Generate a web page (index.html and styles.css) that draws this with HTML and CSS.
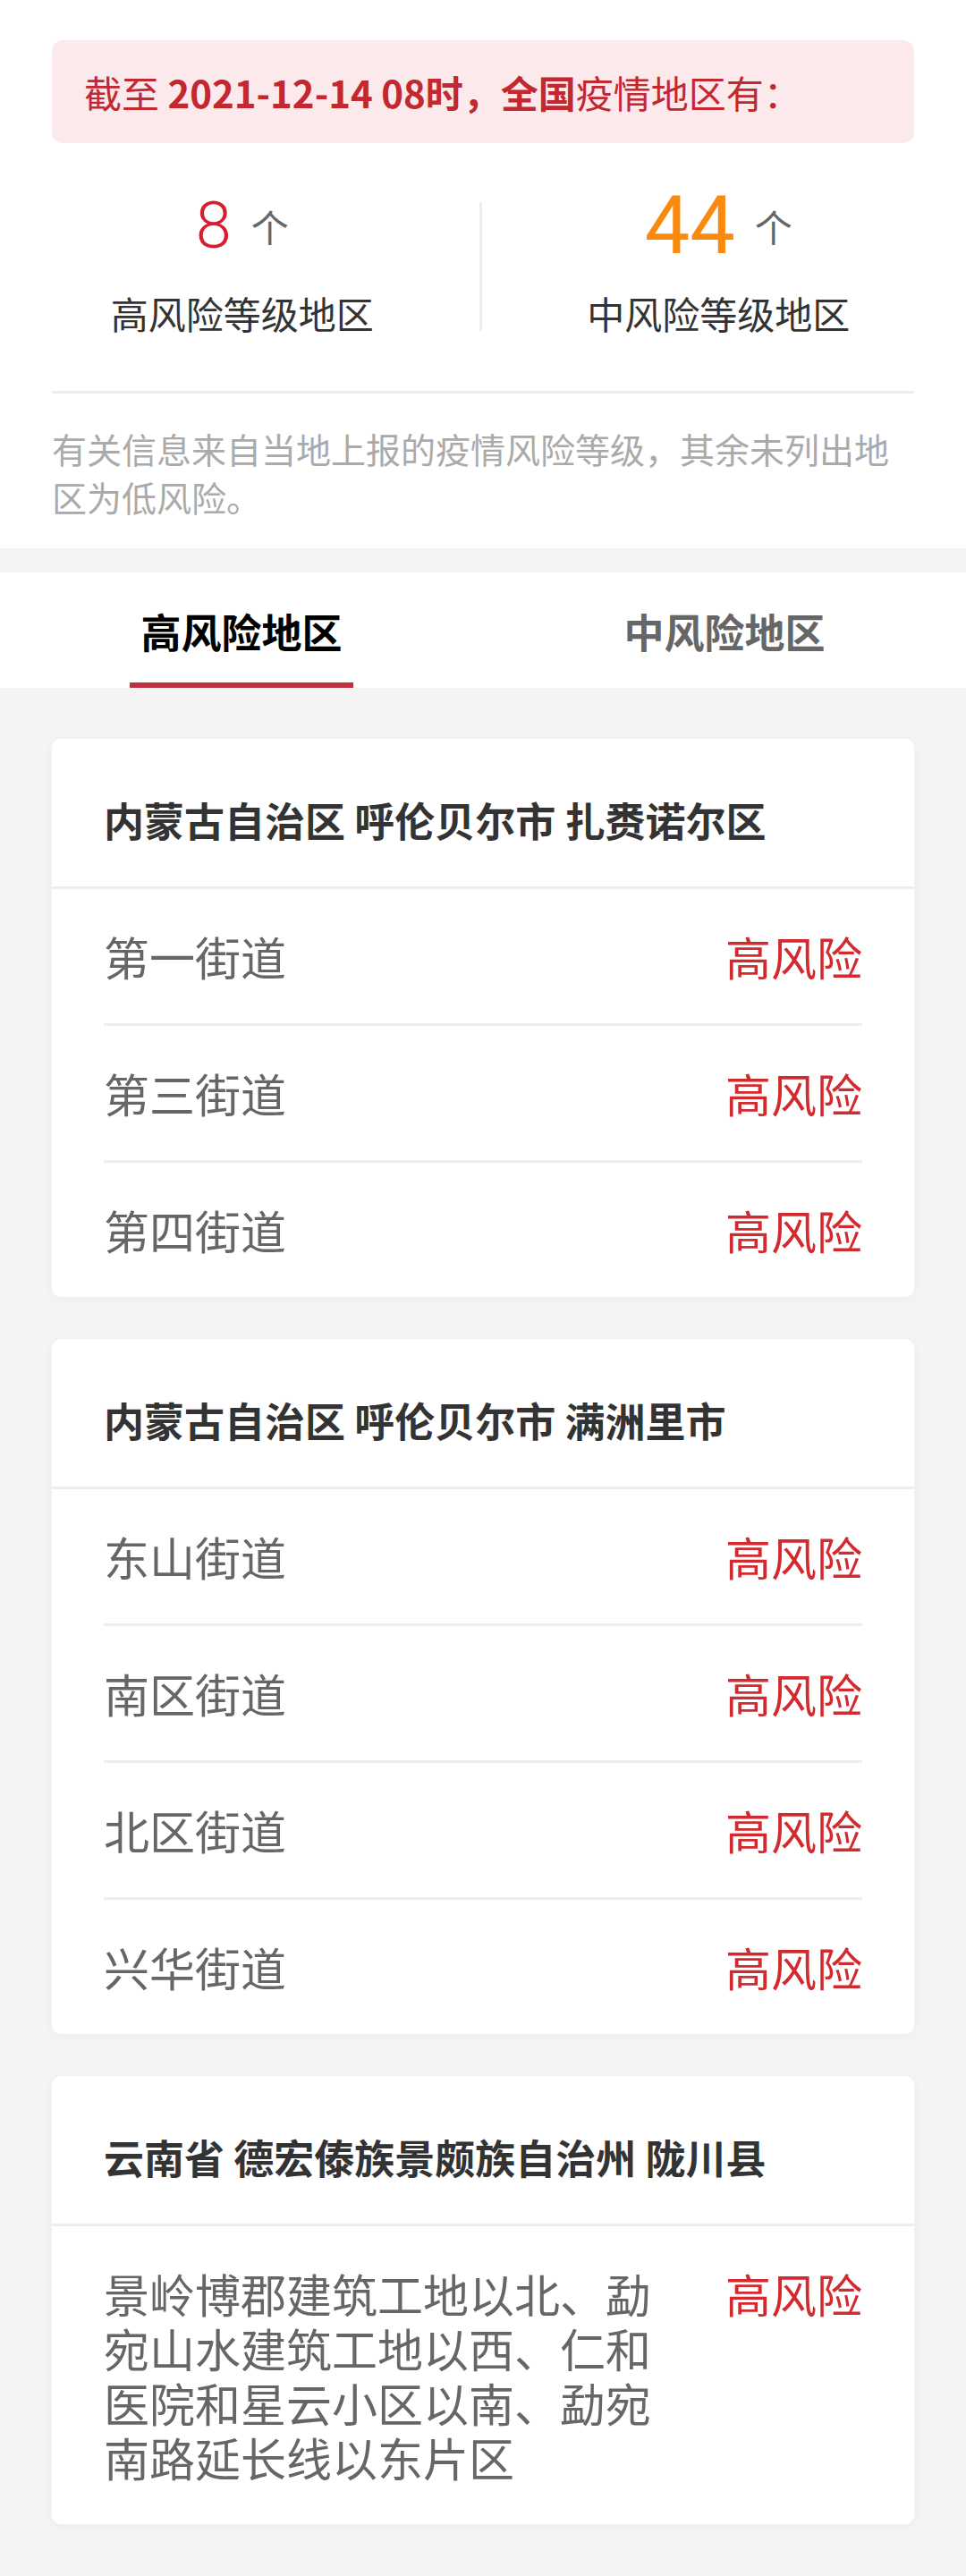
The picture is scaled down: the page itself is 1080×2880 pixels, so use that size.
FILE: index.html
```html
<!DOCTYPE html>
<html lang="zh-CN">
<head>
<meta charset="utf-8">
<title>疫情风险等级地区</title>
<link rel="stylesheet" href="styles.css">
</head>
<body>
<div class="page">
  <section class="summary">
    <div class="alert">截至&nbsp;<b>2021-12-14 08时，全国</b>疫情地区有：</div>
    <div class="stats">
      <div class="stat">
        <div class="stat-num"><span class="num num-high">8</span><span class="unit">个</span></div>
        <div class="stat-label">高风险等级地区</div>
      </div>
      <div class="stat-divider"></div>
      <div class="stat">
        <div class="stat-num"><span class="num num-mid">44</span><span class="unit">个</span></div>
        <div class="stat-label">中风险等级地区</div>
      </div>
    </div>
    <div class="rule"></div>
    <p class="note">有关信息来自当地上报的疫情风险等级，其余未列出地区为低风险。</p>
  </section>

  <nav class="tabs">
    <div class="tab tab-active"><span class="tab-text">高风险地区</span><span class="tab-bar"></span></div>
    <div class="tab"><span class="tab-text">中风险地区</span><span class="tab-bar"></span></div>
  </nav>

  <main class="list">
    <div class="card">
      <div class="card-head">内蒙古自治区 呼伦贝尔市 扎赉诺尔区</div>
      <div class="rows">
        <div class="row"><span class="place">第一街道</span><span class="risk">高风险</span></div>
        <div class="row"><span class="place">第三街道</span><span class="risk">高风险</span></div>
        <div class="row"><span class="place">第四街道</span><span class="risk">高风险</span></div>
      </div>
    </div>

    <div class="card">
      <div class="card-head">内蒙古自治区 呼伦贝尔市 满洲里市</div>
      <div class="rows">
        <div class="row"><span class="place">东山街道</span><span class="risk">高风险</span></div>
        <div class="row"><span class="place">南区街道</span><span class="risk">高风险</span></div>
        <div class="row"><span class="place">北区街道</span><span class="risk">高风险</span></div>
        <div class="row"><span class="place">兴华街道</span><span class="risk">高风险</span></div>
      </div>
    </div>

    <div class="card">
      <div class="card-head">云南省 德宏傣族景颇族自治州 陇川县</div>
      <div class="rows">
        <div class="row"><span class="place">景岭博郡建筑工地以北、勐宛山水建筑工地以西、仁和医院和星云小区以南、勐宛南路延长线以东片区</span><span class="risk">高风险</span></div>
      </div>
    </div>
  </main>
</div>
</body>
</html>
```

FILE: styles.css
```css
html, body {
  margin: 0;
  padding: 0;
}

body {
  background: #f4f4f4;
  font-family: "Noto Sans CJK SC", "Noto Sans", sans-serif;
  color: #333;
}

.page {
  width: 1080px;
}

/* ---------- summary ---------- */
.summary {
  background: #fff;
  padding: 45px 58px 31px;
}

.alert {
  height: 115px;
  display: flex;
  align-items: center;
  padding-left: 36px;
  background: #fbe9eb;
  border-radius: 12px;
  color: #c3272f;
  font-size: 42px;
  line-height: 1;
  white-space: nowrap;
}

.alert b {
  font-weight: 700;
}

.stats {
  display: flex;
  margin: 48px -46px 0 -52px;
}

.stat {
  flex: 1;
  display: flex;
  flex-direction: column;
  align-items: center;
}

.stat-num {
  height: 90px;
  display: flex;
  align-items: center;
}

.num {
  font-family: Roboto, "Liberation Sans", sans-serif;
  line-height: 1;
}

.num-high {
  font-size: 72px;
  font-weight: 300;
  color: #d81e2c;
}

.num-mid {
  font-size: 90px;
  font-weight: 400;
  color: #fa8a0d;
}

.unit {
  margin-left: 22px;
  font-size: 42px;
  line-height: 1;
  color: #666;
}

.stat-label {
  margin-top: 22px;
  font-size: 42px;
  line-height: 60px;
  color: #333;
}

.stat-divider {
  width: 3px;
  height: 144px;
  margin-top: 18px;
  background: #eeeeee;
}

.rule {
  height: 3px;
  margin-top: 57px;
  background: #eeeeee;
}

.note {
  margin: 34px 0 0;
  font-size: 39px;
  line-height: 54px;
  color: #aaaaaa;
}

/* ---------- tabs ---------- */
.tabs {
  display: flex;
  margin-top: 27px;
  background: #fff;
  height: 129px;
}

.tab {
  flex: 1;
  display: flex;
  flex-direction: column;
  align-items: center;
  padding-top: 36px;
  box-sizing: border-box;
}

.tab-text {
  font-size: 45px;
  line-height: 60px;
  font-weight: 700;
  color: #666;
}

.tab-bar {
  width: 250px;
  height: 6px;
  margin-top: 27px;
}

.tab-active .tab-text {
  color: #000;
}

.tab-active .tab-bar {
  background: #bf2f3c;
}

/* ---------- list ---------- */
.list {
  display: flex;
  flex-direction: column;
  gap: 47px;
  padding: 57px 58px 60px;
}

.card {
  background: #fff;
  border-radius: 10px;
  box-shadow: 0 2px 14px rgba(0, 0, 0, 0.035);
  overflow: hidden;
}

.card-head {
  padding: 58px 58px 42px;
  font-size: 45px;
  line-height: 65px;
  font-weight: 700;
  color: #333;
  border-bottom: 3px solid #eeeeee;
}

.rows {
  padding: 0 58px;
}

.row {
  display: flex;
  justify-content: space-between;
  align-items: flex-start;
  padding: 45px 0 44px;
  border-bottom: 3px solid #eeeeee;
  font-size: 51px;
  line-height: 61px;
}

.row:last-child {
  border-bottom: none;
}

.place {
  max-width: 620px;
  color: #666;
}

.risk {
  flex-shrink: 0;
  color: #d22a2f;
}
```
